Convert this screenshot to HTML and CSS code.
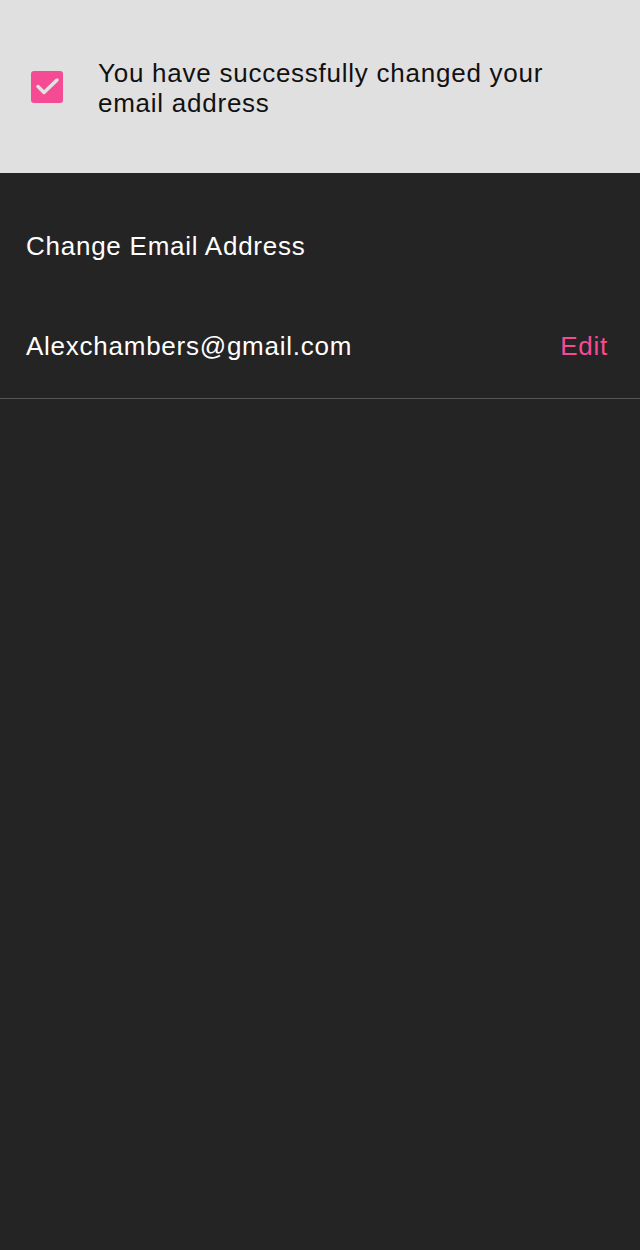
FILE: index.html
```html
<!DOCTYPE html>
<html>
<head>
<meta charset="utf-8">
<link rel="stylesheet" href="styles.css">
</head>
<body>
<div class="banner">
  <span class="check">
    <svg width="32" height="32" viewBox="0 0 32 32"><rect width="32" height="32" rx="3" fill="#f54b95"/><path d="M7 15.5 L13 21.5 L26 9" fill="none" stroke="#e2e2e2" stroke-width="3.5" stroke-linecap="round" stroke-linejoin="round"/></svg>
  </span>
  <p class="msg">You have successfully changed your email address</p>
</div>
<div class="content">
  <h1 class="title">Change Email Address</h1>
  <div class="row">
    <span class="email">Alexchambers@gmail.com</span>
    <span class="edit">Edit</span>
  </div>
</div>
</body>
</html>
```
FILE: styles.css
```css
html, body { margin: 0; padding: 0; }
body {
  background: #242424;
  font-family: "Liberation Sans", Arial, sans-serif;
  width: 640px;
  height: 1250px;
  letter-spacing: 0.75px;
}
.banner {
  background: #e0e0e0;
  height: 173px;
  box-sizing: border-box;
  display: flex;
  align-items: center;
  padding-left: 31px;
  padding-right: 60px;
}
.check { width: 32px; height: 32px; flex: none; display: block; }
.check svg { display: block; }
.msg {
  margin: 2px 0 0 35px;
  font-size: 26px;
  line-height: 30px;
  color: #111;
}
.content { color: #fff; }
.title {
  margin: 0;
  font-weight: normal;
  font-size: 26px;
  line-height: 30px;
  padding: 58px 26px 0;
}
.row {
  display: flex;
  justify-content: space-between;
  align-items: flex-start;
  padding: 70px 33px 0 26px;
  height: 138px;
  box-sizing: border-box;
  border-bottom: 1px solid #555;
  font-size: 26px;
  line-height: 30px;
}
.edit { color: #f54b95; margin-right: -1px; }
```
